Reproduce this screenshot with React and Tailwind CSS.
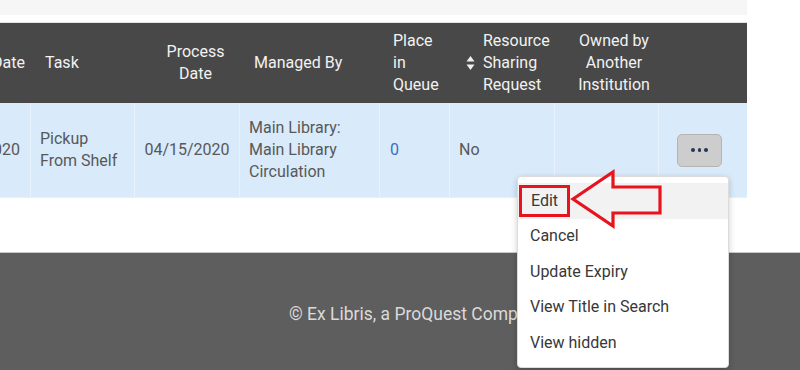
import React from "react";

const font = { fontFamily: "Roboto, 'Noto Sans', sans-serif" };

const menuItems = ["Edit", "Cancel", "Update Expiry", "View Title in Search", "View hidden"];

const SortIcon = () => (
  <svg width="9" height="16" viewBox="0 0 9 16" className="shrink-0">
    <path d="M4.5 1 L8.5 6.5 L0.5 6.5 Z" fill="#f0f0f0" />
    <path d="M4.5 15 L8.5 9.5 L0.5 9.5 Z" fill="#f0f0f0" />
  </svg>
);

const Arrow = () => (
  <svg
    width="100"
    height="64"
    viewBox="0 0 100 64"
    className="absolute left-[570px] top-[168px] pointer-events-none"
  >
    <path
      d="M3 31 L43 4 L43 19 L90 19 L90 45 L43 45 L43 58 Z"
      fill="none"
      stroke="#e8131d"
      strokeWidth="3.2"
      strokeLinejoin="miter"
    />
  </svg>
);

export default function App() {
  return (
    <div className="relative w-[800px] h-[370px] overflow-hidden bg-white text-[16px]" style={font}>
      <div className="w-[747px] h-[15px] bg-[#f6f6f6]" />
      <div className="w-[747px] h-[8px] bg-white border-b border-[#e4e4e4]" />

      {/* table */}
      <div className="w-[747px] overflow-hidden">
        <div className="flex h-[80px] bg-[#484848] text-[#f2f2f2] leading-[22px] items-center">
          <div className="w-[31px] shrink-0 flex justify-end pr-[6px] overflow-hidden whitespace-nowrap">
            Expiry Date
          </div>
          <div className="w-[104px] shrink-0 pl-[14px]">Task</div>
          <div className="w-[105px] shrink-0 pl-[16px] text-center">Process<br />Date</div>
          <div className="w-[140px] shrink-0 pl-[14px]">Managed By</div>
          <div className="w-[70px] shrink-0 pl-[13px]">Place<br />in<br />Queue</div>
          <div className="w-[105px] shrink-0 pl-[16px] flex items-center gap-[8px]">
            <SortIcon />
            <span>Resource<br />Sharing<br />Request</span>
          </div>
          <div className="w-[104px] shrink-0 pl-[14px] text-center">Owned by<br />Another<br />Institution</div>
          <div className="flex-1" />
        </div>

        <div className="flex h-[95px] bg-[#d9eafb] text-[#585858] leading-[22px] border-b border-[#e6f0fb]">
          <div className="w-[31px] shrink-0 flex items-center justify-end pr-[10px] overflow-hidden whitespace-nowrap border-r border-[#e9f2fc]">
            04/15/2020
          </div>
          <div className="w-[104px] shrink-0 pl-[9px] flex items-center border-r border-[#e9f2fc]">
            Pickup<br />From Shelf
          </div>
          <div className="w-[105px] shrink-0 flex items-center justify-center border-r border-[#e9f2fc]">
            04/15/2020
          </div>
          <div className="w-[140px] shrink-0 pl-[9px] flex items-center border-r border-[#e9f2fc]">
            Main Library:<br />Main Library<br />Circulation
          </div>
          <div className="w-[70px] shrink-0 pl-[10px] flex items-center text-[#3b6fc2] border-r border-[#e9f2fc]">
            0
          </div>
          <div className="w-[105px] shrink-0 pl-[9px] flex items-center border-r border-[#e9f2fc]">
            No
          </div>
          <div className="w-[104px] shrink-0 border-r border-[#e9f2fc]" />
          <div className="flex-1 flex items-center pl-[18px]">
            <button className="w-[45px] h-[33px] rounded-[5px] bg-[#cdcdcd] border border-[#b4b4b4] flex items-center justify-center gap-[3px]">
              <span className="w-[3.5px] h-[3.5px] rounded-full bg-[#243452]" />
              <span className="w-[3.5px] h-[3.5px] rounded-full bg-[#243452]" />
              <span className="w-[3.5px] h-[3.5px] rounded-full bg-[#243452]" />
            </button>
          </div>
        </div>
      </div>

      <div className="h-[54px]" />

      {/* footer */}
      <footer className="h-[118px] bg-[#5e5e5e] border-t border-[#c9c9c9] pl-[289px] pt-[49px] text-[17.5px] text-[#dadada] leading-[24px] whitespace-nowrap">
        © Ex Libris, a ProQuest Company
      </footer>

      {/* dropdown menu */}
      <div className="absolute left-[517px] top-[176px] w-[212px] py-[6px] bg-white border border-[#dcdcdc] rounded-[4px] shadow-[0_2px_6px_rgba(0,0,0,0.2)] text-[#383838]">
        {menuItems.map((item, i) => (
          <div
            key={item}
            className={`h-[35.5px] flex items-center pl-[12px] ${i === 0 ? "bg-[#f2f2f2]" : ""}`}
          >
            {i === 0 ? (
              <span className="-ml-[11px] px-[9px] h-[32px] flex items-center border-[3px] border-[#e8131d]">
                {item}
              </span>
            ) : (
              item
            )}
          </div>
        ))}
      </div>

      <Arrow />
    </div>
  );
}
